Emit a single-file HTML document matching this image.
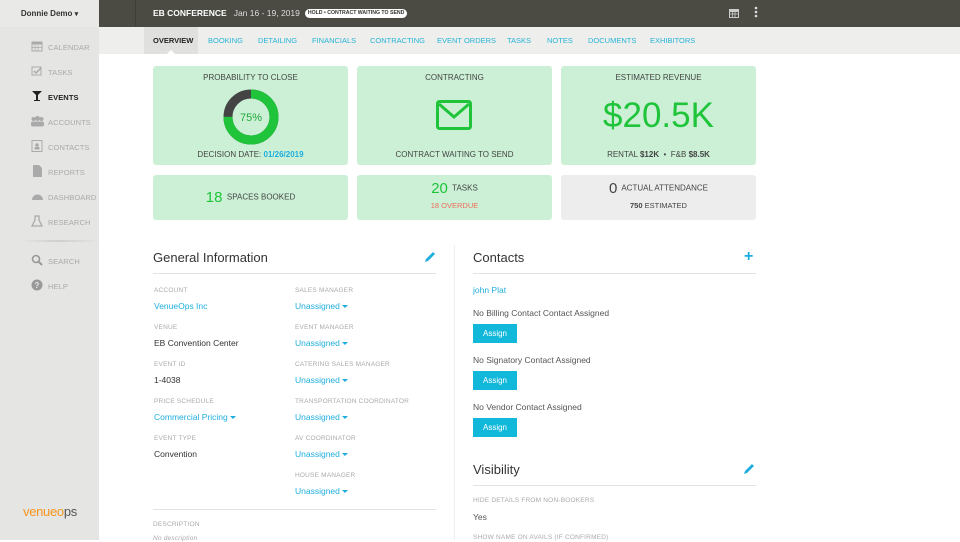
<!DOCTYPE html>
<html><head><meta charset="utf-8"><style>
*{box-sizing:border-box;margin:0;padding:0}
body{width:960px;height:540px;overflow:hidden;font-family:"Liberation Sans",sans-serif;background:#fff;position:relative;color:#444}
.sb{position:absolute;left:0;top:0;width:99px;height:540px;background:#e5e5e3}
.sbh{position:absolute;left:0;top:0;width:99px;height:27px;background:#e9e9e7;font-size:8px;font-weight:bold;color:#333;text-align:center;line-height:28px}
.nav{position:absolute;left:48px;font-size:7.5px;color:#aaa;letter-spacing:.1px}
.nav svg{position:absolute;left:-17px;top:-3px}
.top{position:absolute;left:99px;top:0;width:861px;height:27px;background:#4b4b44}
.tabs{position:absolute;left:99px;top:27px;width:861px;height:27px;background:#eeeeec}
.tab{position:absolute;top:0;height:27px;line-height:28px;font-size:7.5px;color:#27b4d8}
.card{position:absolute;background:#cbf0d6;border-radius:3px;text-align:center;color:#444}
.lbl{font-size:6.5px;color:#aaa;position:absolute;letter-spacing:.2px}
.val{font-size:8.5px;position:absolute;color:#333}
.blue{color:#1eaede}
.car{display:inline-block;border-left:3px solid transparent;border-right:3px solid transparent;border-top:3px solid #1eaede;vertical-align:middle;margin-left:2px}
h2{position:absolute;font-weight:normal;font-size:13px;color:#333}
.hr{position:absolute;height:1px;background:#e3e3e3}
.btn{position:absolute;left:473px;width:44px;height:19px;background:#12b8da;color:#fff;font-size:8px;text-align:center;line-height:19px}
.txt{position:absolute;font-size:8.5px;color:#555}
</style></head><body>
<div class="sb">
<div class="sbh">Donnie Demo <span style="font-size:7px">▾</span></div>
<div class="nav" style="top:43px"><svg width="12" height="12"><rect x="1" y="2" width="10" height="9" fill="none" stroke="#aaa"/><rect x="1" y="2" width="10" height="2.5" fill="#aaa"/><path d="M4 5v6M7 5v6M1 7.5h10" stroke="#aaa" stroke-width=".7"/></svg>CALENDAR</div>
<div class="nav" style="top:68px"><svg width="12" height="12"><rect x="1" y="2" width="9" height="8" fill="none" stroke="#aaa"/><path d="M3 6l2 2 5-5" stroke="#aaa" fill="none" stroke-width="1.5"/></svg>TASKS</div>
<div class="nav" style="top:93px;color:#222;font-weight:bold"><svg width="12" height="12"><path d="M1 1h10L7 5v5h2v1H3v-1h2V5z" fill="#222"/></svg>EVENTS</div>
<div class="nav" style="top:118px"><svg width="13" height="12"><circle cx="6.5" cy="3.5" r="2.5" fill="#aaa"/><circle cx="2.5" cy="4" r="2" fill="#aaa"/><circle cx="10.5" cy="4" r="2" fill="#aaa"/><rect x="0" y="6.5" width="13" height="5" rx="2" fill="#aaa"/></svg>ACCOUNTS</div>
<div class="nav" style="top:143px"><svg width="12" height="12"><rect x="1" y="0.5" width="10" height="11" fill="none" stroke="#aaa"/><circle cx="6" cy="5" r="1.8" fill="#aaa"/><rect x="3.5" y="7" width="5" height="2.5" fill="#aaa"/></svg>CONTACTS</div>
<div class="nav" style="top:168px"><svg width="12" height="12"><path d="M2 0h6l3 3v9H2z" fill="#aaa"/></svg>REPORTS</div>
<div class="nav" style="top:193px"><svg width="13" height="12"><path d="M1 10a5.5 5.5 0 1 1 11 0z" fill="#aaa"/></svg>DASHBOARD</div>
<div class="nav" style="top:218px"><svg width="12" height="12"><path d="M4 1h4v4l3 6H1l3-6z" fill="none" stroke="#aaa" stroke-width="1.3"/></svg>RESEARCH</div>
<div style="position:absolute;left:20px;top:240px;width:79px;height:2px;background:linear-gradient(90deg,#e5e5e3,#cfcfcd,#e5e5e3)"></div>
<div class="nav" style="top:257px"><svg width="12" height="12"><circle cx="5" cy="5" r="3.5" fill="none" stroke="#999" stroke-width="1.6"/><path d="M7.5 7.5l3.5 3.5" stroke="#999" stroke-width="2"/></svg>SEARCH</div>
<div class="nav" style="top:282px"><svg width="12" height="12"><circle cx="6" cy="6" r="5.5" fill="#999"/><text x="6" y="9" font-size="8" font-weight="bold" fill="#e5e5e3" text-anchor="middle" font-family="Liberation Sans">?</text></svg>HELP</div>
<div style="position:absolute;left:23px;top:504px;font-size:13px;color:#f7941d;letter-spacing:-.3px">venue<span style="color:#f7941d">o</span><span style="color:#555">ps</span></div>
</div>
<div class="top">
<div style="position:absolute;left:36px;top:0;width:1px;height:27px;background:#3e3e38"></div>
<div style="position:absolute;left:54px;top:8px;font-size:8.5px;font-weight:bold;color:#fff;white-space:nowrap;display:flex;align-items:center">EB CONFERENCE <span style="font-weight:normal;color:#ddd;margin-left:7px;font-size:8.5px">Jan 16 - 19, 2019</span><span style="margin-left:5px;height:9px;padding:0 3px;background:#fff;border-radius:5px;font-size:5.2px;font-weight:bold;color:#333;line-height:9px">HOLD • CONTRACT WAITING TO SEND</span></div>
<svg style="position:absolute;left:629px;top:7px" width="12" height="12"><rect x="1" y="2" width="10" height="9" fill="#ccc"/><rect x="2" y="5" width="8" height="5" fill="#4b4b44"/><path d="M2 7h8M4.5 5v5M7 5v5" stroke="#ccc" stroke-width=".8"/></svg>
<svg style="position:absolute;left:655px;top:6px" width="4" height="13"><circle cx="2" cy="2" r="1.3" fill="#ddd"/><circle cx="2" cy="6" r="1.3" fill="#ddd"/><circle cx="2" cy="10" r="1.3" fill="#ddd"/></svg>
</div>
<div class="tabs">
<div style="position:absolute;left:45px;top:0;width:54px;height:27px;background:#e0e0de"></div>
<div class="tab" style="left:54px;color:#222;font-weight:bold">OVERVIEW</div>
<div class="tab" style="left:109px">BOOKING</div>
<div class="tab" style="left:159px">DETAILING</div>
<div class="tab" style="left:213px">FINANCIALS</div>
<div class="tab" style="left:271px">CONTRACTING</div>
<div class="tab" style="left:338px">EVENT ORDERS</div>
<div class="tab" style="left:408px">TASKS</div>
<div class="tab" style="left:448px">NOTES</div>
<div class="tab" style="left:489px">DOCUMENTS</div>
<div class="tab" style="left:551px">EXHIBITORS</div>
<div style="position:absolute;left:68px;top:23px;border-left:4px solid transparent;border-right:4px solid transparent;border-bottom:4px solid #fff"></div>
</div>

<div class="card" style="left:153px;top:66px;width:195px;height:99px">
<div style="font-size:8px;margin-top:7px">PROBABILITY TO CLOSE</div>
<svg style="position:absolute;left:69px;top:22px" width="58" height="58"><circle cx="29" cy="29" r="23" fill="none" stroke="#444" stroke-width="9"/><circle cx="29" cy="29" r="23" fill="none" stroke="#1fc43a" stroke-width="9" stroke-dasharray="108.4 144.5" transform="rotate(-90 29 29)"/><text x="29" y="33" font-size="11" fill="#1fa83a" text-anchor="middle" font-family="Liberation Sans">75%</text></svg>
<div style="position:absolute;left:0;right:0;top:84px;font-size:8px">DECISION DATE: <b class="blue">01/26/2019</b></div>
</div>
<div class="card" style="left:357px;top:66px;width:195px;height:99px">
<div style="font-size:8px;margin-top:7px">CONTRACTING</div>
<svg style="position:absolute;left:79px;top:34px" width="36" height="30"><rect x="1.5" y="1.5" width="33" height="27" rx="2" fill="none" stroke="#1fc43a" stroke-width="3"/><path d="M3 4l15 13 15-13" fill="none" stroke="#1fc43a" stroke-width="3"/></svg>
<div style="position:absolute;left:0;right:0;top:84px;font-size:8px">CONTRACT WAITING TO SEND</div>
</div>
<div class="card" style="left:561px;top:66px;width:195px;height:99px">
<div style="font-size:8px;margin-top:7px">ESTIMATED REVENUE</div>
<div style="position:absolute;left:0;right:0;top:30px;font-size:35px;color:#1fc43a">$20.5K</div>
<div style="position:absolute;left:0;right:0;top:84px;font-size:8px">RENTAL <b>$12K</b> &nbsp;•&nbsp; F&amp;B <b>$8.5K</b></div>
</div>
<div class="card" style="left:153px;top:175px;width:195px;height:45px"><div style="margin-top:14px;font-size:8px"><span style="font-size:15px;color:#1fc43a;vertical-align:middle">18</span>&nbsp; SPACES BOOKED</div></div>
<div class="card" style="left:357px;top:175px;width:195px;height:45px"><div style="margin-top:5px;font-size:8px"><span style="font-size:15px;color:#1fc43a;vertical-align:middle">20</span>&nbsp; TASKS</div><div style="font-size:7.5px;color:#f06b5a;margin-top:4px">18 OVERDUE</div></div>
<div class="card" style="left:561px;top:175px;width:195px;height:45px;background:#ededed"><div style="margin-top:5px;font-size:8px"><span style="font-size:15px;color:#444;vertical-align:middle">0</span>&nbsp; ACTUAL ATTENDANCE</div><div style="font-size:7.5px;margin-top:4px"><b>750</b> ESTIMATED</div></div>

<h2 style="left:153px;top:250px">General Information</h2>
<svg style="position:absolute;left:424px;top:251px" width="12" height="12"><path d="M1 11l1-3 6-6 2 2-6 6z M9 1l2 2-1 1-2-2z" fill="#1eaede"/></svg>
<div class="hr" style="left:153px;top:273px;width:283px"></div>
<div class="lbl" style="left:154px;top:287px">ACCOUNT</div><div class="val blue" style="left:154px;top:301px">VenueOps Inc</div>
<div class="lbl" style="left:154px;top:324px">VENUE</div><div class="val" style="left:154px;top:338px">EB Convention Center</div>
<div class="lbl" style="left:154px;top:361px">EVENT ID</div><div class="val" style="left:154px;top:375px">1-4038</div>
<div class="lbl" style="left:154px;top:398px">PRICE SCHEDULE</div><div class="val blue" style="left:154px;top:412px">Commercial Pricing<span class="car"></span></div>
<div class="lbl" style="left:154px;top:435px">EVENT TYPE</div><div class="val" style="left:154px;top:449px">Convention</div>
<div class="lbl" style="left:295px;top:287px">SALES MANAGER</div><div class="val blue" style="left:295px;top:301px">Unassigned<span class="car"></span></div>
<div class="lbl" style="left:295px;top:324px">EVENT MANAGER</div><div class="val blue" style="left:295px;top:338px">Unassigned<span class="car"></span></div>
<div class="lbl" style="left:295px;top:361px">CATERING SALES MANAGER</div><div class="val blue" style="left:295px;top:375px">Unassigned<span class="car"></span></div>
<div class="lbl" style="left:295px;top:398px">TRANSPORTATION COORDINATOR</div><div class="val blue" style="left:295px;top:412px">Unassigned<span class="car"></span></div>
<div class="lbl" style="left:295px;top:435px">AV COORDINATOR</div><div class="val blue" style="left:295px;top:449px">Unassigned<span class="car"></span></div>
<div class="lbl" style="left:295px;top:472px">HOUSE MANAGER</div><div class="val blue" style="left:295px;top:486px">Unassigned<span class="car"></span></div>
<div class="hr" style="left:153px;top:509px;width:283px"></div>
<div class="lbl" style="left:153px;top:521px">DESCRIPTION</div>
<div class="lbl" style="left:153px;top:535px;font-style:italic">No description</div>
<div style="position:absolute;left:454px;top:245px;width:1px;height:295px;background:#eee"></div>

<h2 style="left:473px;top:250px">Contacts</h2>
<div style="position:absolute;left:744px;top:250px;font-size:16px;font-weight:bold;color:#1eaede;line-height:14px">+</div>
<div class="hr" style="left:473px;top:273px;width:283px"></div>
<div class="val blue" style="left:473px;top:285px">john Plat</div>
<div class="txt" style="left:473px;top:308px">No Billing Contact Contact Assigned</div>
<div class="btn" style="top:324px">Assign</div>
<div class="txt" style="left:473px;top:355px">No Signatory Contact Assigned</div>
<div class="btn" style="top:371px">Assign</div>
<div class="txt" style="left:473px;top:402px">No Vendor Contact Assigned</div>
<div class="btn" style="top:418px">Assign</div>
<h2 style="left:473px;top:462px">Visibility</h2>
<svg style="position:absolute;left:743px;top:463px" width="12" height="12"><path d="M1 11l1-3 6-6 2 2-6 6z M9 1l2 2-1 1-2-2z" fill="#1eaede"/></svg>
<div class="hr" style="left:473px;top:485px;width:283px"></div>
<div class="lbl" style="left:473px;top:497px">HIDE DETAILS FROM NON-BOOKERS</div>
<div class="txt" style="left:473px;top:512px">Yes</div>
<div class="lbl" style="left:473px;top:534px">SHOW NAME ON AVAILS (IF CONFIRMED)</div>
</body></html>
